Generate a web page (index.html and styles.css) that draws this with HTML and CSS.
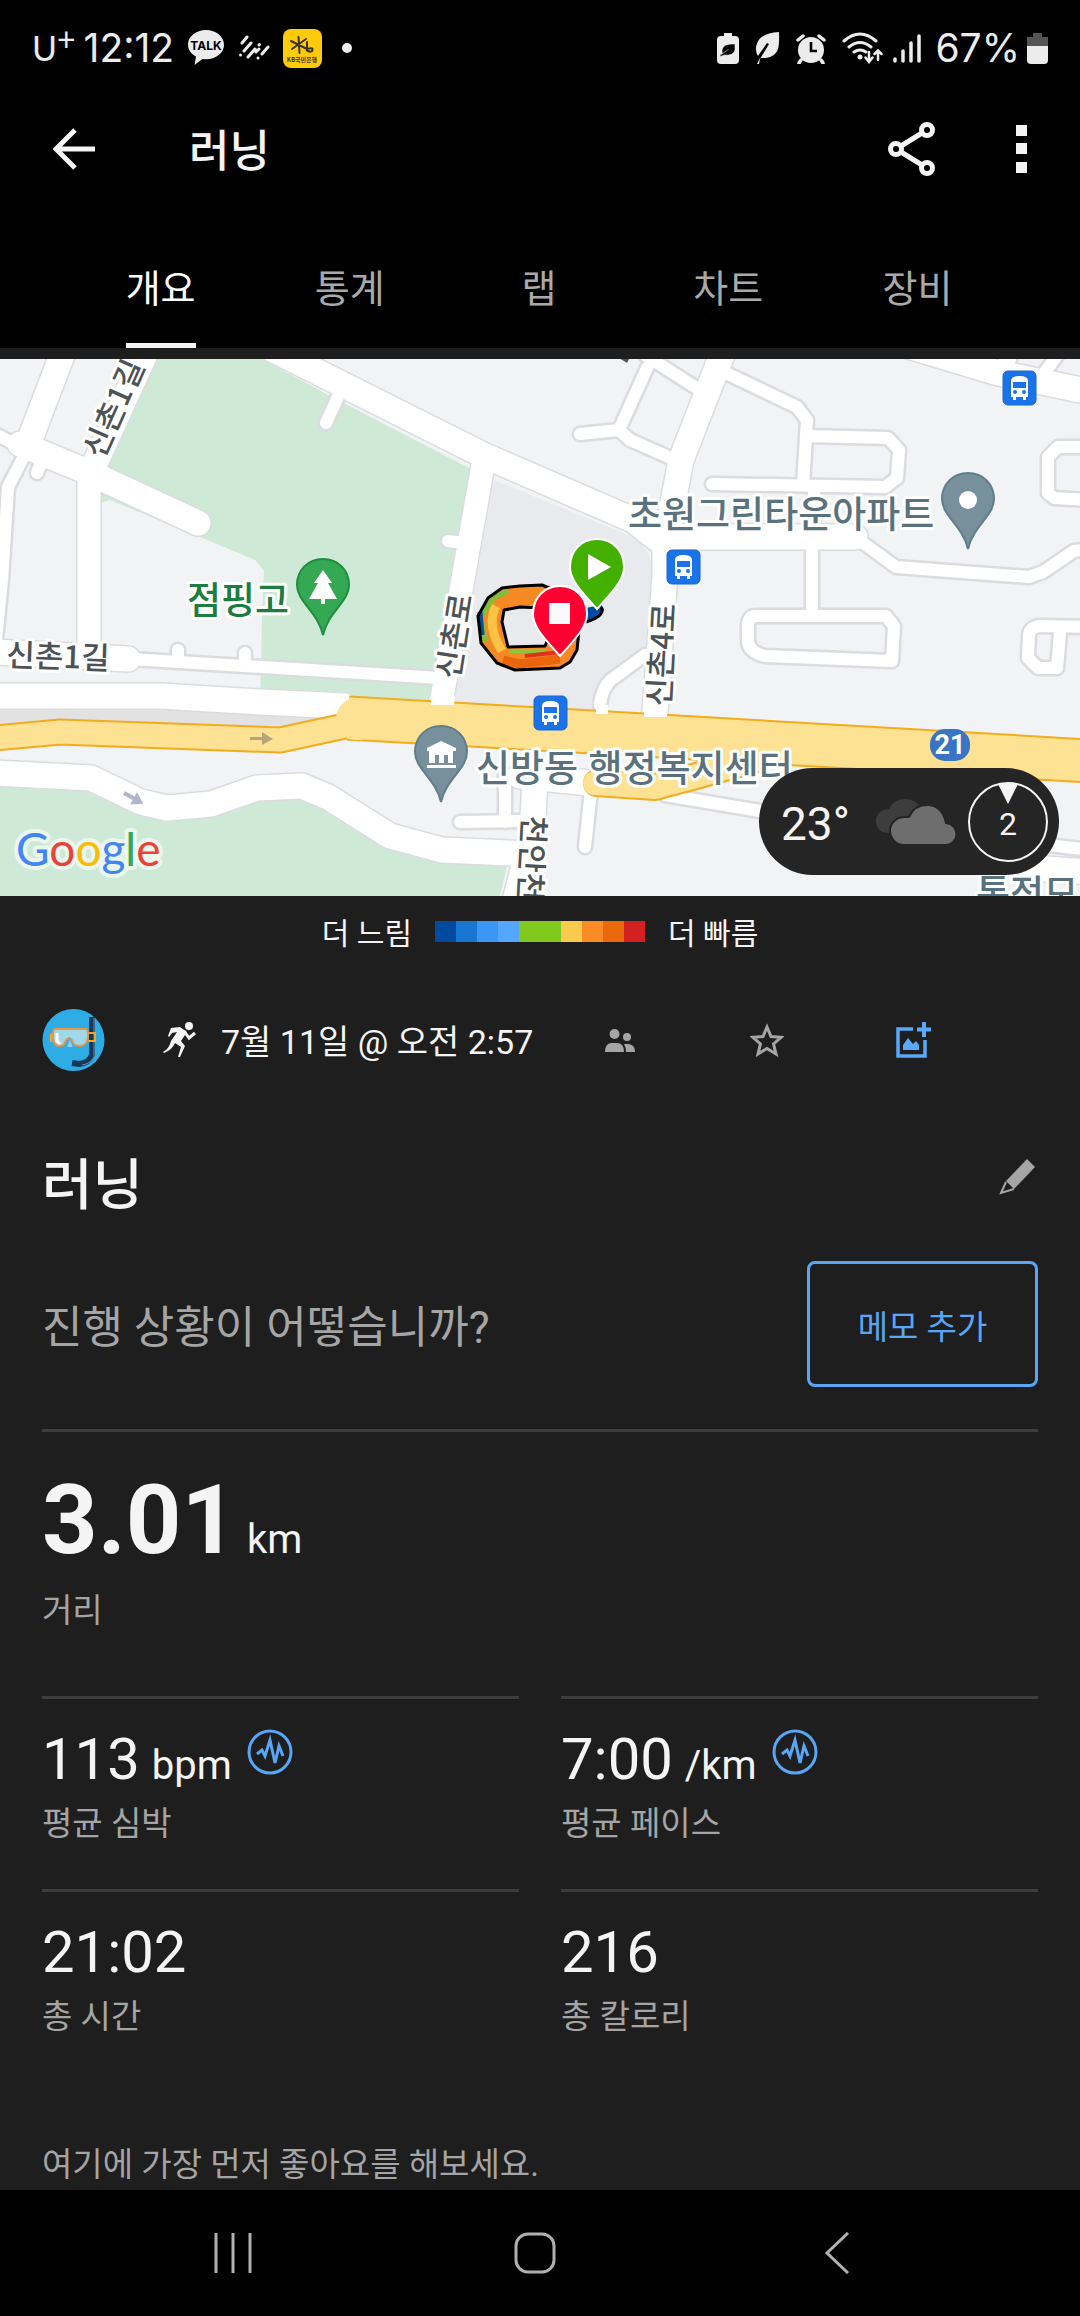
FILE: index.html
```html
<!DOCTYPE html>
<html lang="ko">
<head>
<meta charset="utf-8">
<meta name="viewport" content="width=device-width, initial-scale=1">
<title>러닝</title>
<link rel="stylesheet" href="styles.css">
</head>
<body>
<header class="top">
  <div class="status">
    <div class="status-side">
      <span class="carrier">U<sup>+</sup></span>
      <span class="clock">12:12</span>
      <svg class="ic-talk" width="38" height="38" viewBox="0 0 38 38"><path d="M19 1C9 1 1 7.500 1 15.500c0 5 3 9.500 8 12L7.500 36l8-6c1 .2 2.300.3 3.500.3 10 0 18-6.500 18-14.600S29 1 19 1z" fill="#ececec"/><text x="19" y="21" text-anchor="middle" class="talk-text">TALK</text></svg>
      <svg width="32" height="28" viewBox="0 0 32 28" fill="none" stroke="#ececec" stroke-width="3" stroke-linecap="round"><path d="M4 9l5-6M6 17l7-8M2.500 21v.1M10 23l7-8M21 11l.5-.5M20 24v.1M18 18l3-3M24 20l6-7"/></svg>
      <svg class="ic-kb" width="39" height="39" viewBox="0 0 39 39"><rect width="39" height="39" rx="8" fill="#fdcb0a"/><path d="M8 12l16 8M9 20L23 10M15.500 8l1 16M24 13v7q6-2 5.500 1t-5.500.5" fill="none" stroke="#3a3223" stroke-width="2" stroke-linecap="round"/><text x="19" y="33" text-anchor="middle" class="kb-text">KB국민은행</text></svg>
      <svg width="10" height="10" viewBox="0 0 10 10"><circle cx="5" cy="5" r="5" fill="#ececec"/></svg>
    </div>
    <div class="status-side right">
      <svg width="22" height="31" viewBox="0 0 22 31"><path d="M7 0h8v3h3a4 4 0 0 1 4 4v20a4 4 0 0 1-4 4H4a4 4 0 0 1-4-4V7a4 4 0 0 1 4-4h3z" fill="#ececec"/><path d="M18 11q-12-1-13 6-.2 2 .5 3.500L3 22l.5 1.500 4-1.500q9 1 10.500-5zM5.500 20.500l6-4" fill="#000" stroke="#ececec" stroke-width=".6"/></svg>
      <svg width="25" height="32" viewBox="0 0 25 32"><path d="M24 0Q3 1 1 15q-.5 5 2 9l9-13 2 1L5 27l-1 5H2l3-6q16 1 18.500-11Q24.500 8 24 0z" fill="#ececec"/></svg>
      <svg width="30" height="31" viewBox="0 0 30 31"><circle cx="15" cy="17" r="13" fill="#ececec"/><path d="M2 7l5-4M28 7l-5-4M5 27l-2 3M25 27l2 3" stroke="#ececec" stroke-width="3.500" stroke-linecap="round"/><path d="M15 9v9h6" fill="none" stroke="#000" stroke-width="2.600"/></svg>
      <svg class="ic-wifi" width="42" height="32" viewBox="0 0 42 32" fill="none" stroke="#ececec" stroke-width="3" stroke-linecap="round"><path d="M2 9Q18-5 34 9M7 15q11-9 22 0M12 20q6-4 12 0"/><circle cx="18" cy="25" r="2.500" fill="#ececec" stroke="none"/><path d="M27 20v9m-3.500-3.500L27 30l3.500-4.500M36 28v-9m-3.500 3L36 18.500l3.500 3.500" stroke-width="2.500"/></svg>
      <svg width="28" height="31" viewBox="0 0 28 31" stroke="#ececec" stroke-width="3.500" stroke-linecap="round"><path d="M2 26v2M10 18v10M18 10v18M26 3v25"/></svg>
      <span class="percent">67%</span>
      <svg width="21" height="31" viewBox="0 0 21 31"><path d="M6 0h9v4h6v9H0V4h6z" fill="#555"/><path d="M0 13h21v14a4 4 0 0 1-4 4H4a4 4 0 0 1-4-4z" fill="#ececec"/></svg>
    </div>
  </div>
  <div class="appbar">
    <button class="icon-btn" aria-label="뒤로"><svg width="42" height="42" viewBox="0 0 42 42" fill="none" stroke="#f4f4f4" stroke-width="5"><path d="M22 2L3 21l19 19M4 21h38"/></svg></button>
    <h1>러닝</h1>
    <button class="icon-btn" aria-label="공유"><svg width="48" height="54" viewBox="0 0 48 54" fill="none" stroke="#f4f4f4" stroke-width="5"><circle cx="8" cy="27" r="5.500"/><circle cx="39" cy="8" r="5.500"/><circle cx="39" cy="46" r="5.500"/><path d="M13 24l21-13M13 30l21 13"/></svg></button>
    <button class="icon-btn more" aria-label="더보기"><svg width="11" height="48" viewBox="0 0 11 48" fill="#f4f4f4"><path d="M0 0h11v11H0zM0 18h11v11H0zM0 37h11v11H0z"/></svg></button>
  </div>
  <nav class="tabs">
    <a href="#overview" class="active">개요</a>
    <a href="#stats">통계</a>
    <a href="#laps">랩</a>
    <a href="#charts">차트</a>
    <a href="#gear">장비</a>
  </nav>
</header>

<main>
  <section class="map" aria-label="지도">
    <svg class="map-canvas" viewBox="0 359 1080 537">
      <defs>
        <g id="wide">
          <path d="M64 350L27 447"/>
          <path d="M146 352L92 470"/>
          <path d="M20 444L88 472L198 523"/>
          <path d="M270 348L483 455L633 520L665 545"/>
          <path d="M725 347L681 460L665 545L665 575L655 712"/>
          <path d="M665 537L855 537"/>
          <path d="M905 345L995 372L1090 392"/>
          <path d="M-5 696L25 696L160 696L260 702L345 706"/>
          <path d="M-5 773L91 778L141 802L167 808L211 804L257 788L302 786L328 797L390 836L442 850L530 854"/>
          <path d="M-5 652L128 659"/>
          <path d="M520 776L590 783"/>
          <path d="M535 780L532 835L514 905"/>
          <path d="M1030 868L1090 872"/>
        </g>
        <g id="medium">
          <path d="M89 470L89 650"/>
          <path d="M483 465L442 698"/>
        </g>
        <g id="narrow">
          <path d="M-5 434L27 450L8 487L2 580L-5 650"/>
          <path d="M42 460L37 473M341 390L326 423M448 541L465 543"/>
          <path d="M130 659L440 678M178 650L178 660M245 653L245 663"/>
          <path d="M645 355L695 387M647 368L619 430L580 434M619 430L630 440L680 462"/>
          <path d="M728 374L797 407L807 420L803 485M807 436L888 438L899 450L897 478L885 487L712 484M814 487L814 525"/>
          <path d="M855 537L896 567L1029 577L1043 572L1074 551L1090 549"/>
          <path d="M812 545L812 615M755 616L886 616L894 626L892 661L765 656Q748 652 748 640V627Q748 616 755 616"/>
          <path d="M1090 447L1058 447L1048 457L1048 493L1054 498L1090 500"/>
          <path d="M1090 627L1040 626Q1030 627 1029 635L1028 658L1038 668L1057 668L1060 633"/>
          <path d="M600 705Q602 688 611 680L645 655"/>
          <path d="M505 775L505 822M460 822L520 821M591 790L585 847"/>
          <path d="M665 795L760 811L1090 850"/>
          <path d="M1045 372L1065 345M1010 360L995 350"/>
        </g>
        <path id="pin" d="M0-26C-15-26-26-15-26 0C-26 17-5 27 0 50C5 27 26 17 26 0C26-15 15-26 0-26z"/>
        <path id="marker" d="M0-28C-16-28-27-16-27 0C-27 14-14 26 0 42C14 26 27 14 27 0C27-16 16-28 0-28z"/>
        <g id="bus">
          <rect width="33" height="34" rx="5" fill="#1a73e8" stroke="#1967d2"/>
          <path d="M8 26V10q0-5 8.500-5T25 10v16h-2v3h-3v-3h-7v3h-3v-3z" fill="#fff"/>
          <path d="M10 11h13v6H10z" fill="#1a73e8"/><circle cx="12" cy="21" r="2" fill="#1a73e8"/><circle cx="21" cy="21" r="2" fill="#1a73e8"/>
        </g>
      </defs>
      <rect y="359" width="1080" height="537" fill="#f1f3f4"/>
      <path d="M152 359L100 470V503L110 500L200 537L255 560L264 571L262 620L260 705L430 712L471 469L332 397L262 359z" fill="#ceead6"/>
      <path d="M494 480L640 540L655 566L645 655L605 690L596 715L454 705z" fill="#e8eaed"/>
      <path d="M0 773L91 778L167 808L257 788L302 786L390 836L442 850L510 854L500 896H0z" fill="#ceead6"/>
      <path d="M0 705H160L335 714L280 730L60 722L0 730z" fill="#e2e2e2"/>
      <g class="roads casing">
        <use href="#wide" stroke-width="28"/><use href="#medium" stroke-width="26"/><use href="#narrow" stroke-width="17"/>
      </g>
      <g class="roads surface">
        <use href="#wide" stroke-width="25"/><use href="#medium" stroke-width="23"/><use href="#narrow" stroke-width="12"/>
      </g>
      <g class="roads highway-edge">
        <path d="M-5 738L60 732L280 740L345 726" stroke-width="27"/>
        <path d="M348 718L540 729L1090 761" stroke-width="45" stroke-linecap="butt"/>
        <path d="M597 783L655 787L700 775L760 758" stroke-width="28"/>
      </g>
      <g class="roads highway">
        <path d="M-5 738L60 732L280 740L345 726" stroke-width="23"/>
        <path d="M348 718L540 729L1090 761" stroke-width="41" stroke-linecap="butt"/>
        <path d="M357 719L358 719" stroke-width="42"/>
        <path d="M595 783L655 787L700 775L760 758" stroke-width="24"/>
      </g>
      <path d="M431 696h24l-1 9h-23zM644 708h23v9h-23zM596 705h12v9h-12z" fill="#fff"/>
      <path d="M250 737h12v-5l11 7-11 6v-5h-12z" fill="#b5a57a"/>
      <path d="M0-2h11v-5l11 7-11 7v-5H0z" transform="translate(124 793) rotate(29)" fill="#b0b4cc"/>
      <path d="M621 357l7 4" stroke="#4c5256" stroke-width="4"/>

      <g class="map-label road-label">
        <text transform="translate(103 460) rotate(-66)">신촌1길</text>
        <text transform="translate(6 666) rotate(2)">신촌1길</text>
        <text transform="translate(459 680) rotate(-81)">신촌로</text>
        <text transform="translate(670 707) rotate(-87)">신촌4로</text>
        <text transform="translate(523 815) rotate(93)">천안천</text>
      </g>

      <path d="M502 588L520 586L542 585L562 593L580 620L577 650L570 662L560 668L515 670L497 663L481 643L478 616L488 598zM504 610L502 622L508 647L545 646L552 630L542 608L520 607z" fill="#f58a24" fill-rule="evenodd"/>
      <path d="M482 615L493 598L508 591M482 622L485 642" fill="none" stroke="#7cc13b" stroke-width="5"/>
      <path d="M480 612L482 635" fill="none" stroke="#0b4a8c" stroke-width="5"/>
      <path d="M496 606Q486 625 502 651" fill="none" stroke="#fbc343" stroke-width="9"/>
      <path d="M503 660L520 664L560 659" fill="none" stroke="#ea650d" stroke-width="9"/>
      <path d="M509 651L545 651" fill="none" stroke="#8cc63f" stroke-width="4"/>
      <path d="M525 656L560 652" fill="none" stroke="#e0311a" stroke-width="4"/>
      <path d="M502 588L520 586L542 585L562 593L580 620L577 650L570 662L560 668L515 670L497 663L481 643L478 616L488 598zM504 610L502 622L508 647L545 646L552 630L542 608L520 607z" fill="none" stroke="#000" stroke-width="3" stroke-linejoin="round"/>
      <path d="M585 608L602 605L602 614Q596 620 586 622z" fill="#004ba0"/>
      <path d="M601 607Q604 611 600 615T586 622" fill="none" stroke="#000" stroke-width="3"/>
      <use href="#marker" x="597" y="567" fill="#43b000" stroke="#fff" stroke-width="2"/>
      <path d="M588 554v26l23-13z" fill="#fff"/>
      <use href="#marker" x="560" y="614" fill="#ff0032" stroke="#fff" stroke-width="2"/>
      <path d="M549 603h21v21h-21z" fill="#fafafa"/>

      <use href="#bus" x="1003" y="371"/>
      <use href="#bus" x="667" y="550"/>
      <use href="#bus" x="534" y="696"/>
      <rect x="930" y="729" width="40" height="32" rx="15" fill="#3a74c5"/>
      <text x="950" y="754" text-anchor="middle" class="shield-text">21</text>

      <use href="#pin" x="323" y="585" fill="#34a853" stroke="#1e8e3e" stroke-width="2"/>
      <path d="M323 570l9 13h-4l9 16h-12v5h-4v-5h-12l9-16h-4z" fill="#fff"/>
      <use href="#pin" x="968" y="499" fill="#78909c" stroke="#607d8b" stroke-width="2"/>
      <circle cx="968" cy="500" r="9" fill="#fff"/>
      <use href="#pin" x="441" y="752" fill="#78909c" stroke="#607d8b" stroke-width="2"/>
      <path d="M441 741l15 7v3h-3v12h-5v-8h-4v8h-5v-8h-4v8h-6v-12h-2v-3zM427 765h29v3h-29z" fill="#fff"/>

      <g class="map-label place-label">
        <text x="187" y="614" class="park-label">점핑고</text>
        <text x="628" y="528">초원그린타운아파트</text>
        <text x="476" y="782">신방동 행정복지센터</text>
        <text x="976" y="907">통정모</text>
      </g>
      <text x="16" y="866" class="google"><tspan fill="#4285f4">G</tspan><tspan fill="#ea4335">o</tspan><tspan fill="#fbbc05">o</tspan><tspan fill="#4285f4">g</tspan><tspan fill="#34a853">l</tspan><tspan fill="#ea4335">e</tspan></text>
    </svg>
    <div class="weather">
      <span class="temp">23°</span>
      <svg width="82" height="46" viewBox="0 0 82 46"><path d="M13 34a12 12 0 0 1 2-24Q20 0 31 0q12 0 18 12L40 34z" fill="#3d3d3d"/><path d="M29 46a14 14 0 0 1 2-28h4Q40 6 53 6q15 0 19 18a11 11 0 0 1-1 22z" fill="#6e6e6e" stroke="#252525" stroke-width="2"/></svg>
      <span class="wind">2<svg viewBox="0 0 20 20"><path d="M0 0h20l-10 20z" fill="#f4f4f4"/></svg></span>
    </div>
  </section>

  <div class="legend">
    <span>더 느림</span>
    <div class="scale"><i class="c1"></i><i class="c2"></i><i class="c3"></i><i class="c4"></i><i class="c5"></i><i class="c5"></i><i class="c6"></i><i class="c7"></i><i class="c8"></i><i class="c9"></i></div>
    <span>더 빠름</span>
  </div>

  <div class="content">
    <div class="meta">
      <svg class="avatar" width="63" height="62" viewBox="0 0 63 62"><circle cx="31.500" cy="31" r="31" fill="#2dade4"/><path d="M50 8v38q-3 8-13 9l-7-1" fill="none" stroke="#12395c" stroke-width="6"/><path d="M52 9v39q-4 7-12 8" fill="none" stroke="#6d93a8" stroke-width="1"/><path d="M9 25v8M46 24h7v8h-7" stroke="#f5a623" stroke-width="2" fill="none"/><path d="M14 20h29q3 0 3 4v4q-1 9-8 9-6 0-7-4-2-4-4-4t-4 4q-1 4-5 4-7 0-7-9v-4q0-4 3-4z" fill="#9fd9e8" stroke="#e8954a" stroke-width="2"/><path d="M15 24v8l3 3" stroke="#fff" stroke-width="3" fill="none"/><path d="M25 38l3-9 3 9" fill="#8bd0ef" stroke="#4eb4e4"/></svg>
      <svg class="runner" width="34" height="36" viewBox="0 0 34 36"><circle cx="26" cy="4" r="4" fill="#f4f4f4"/><path d="M8 6l9-1 7 5-6 9 4 5-5 11h-2l3-10-6-4q-3 7-11 10l-1-1q6-3 8-11l6-9-5 1-3 4-1-1z" fill="#f4f4f4"/><path d="M21 9l5 7 6-5" stroke="#f4f4f4" stroke-width="3" fill="none"/></svg>
      <span class="date">7월 11일 @ 오전 2:57</span>
      <div class="actions">
        <button aria-label="공개 범위"><svg width="30" height="23" viewBox="0 0 30 23" fill="#a5a5a5"><circle cx="9.500" cy="5" r="5"/><circle cx="22" cy="8" r="4"/><path d="M0 23q0-9 7-9h5q7 0 7 9zM19 15h5q6 1 6 8h-9q0-5-2-8z"/></svg></button>
        <button aria-label="즐겨찾기"><svg width="34" height="34" viewBox="0 0 34 34" fill="none" stroke="#a5a5a5" stroke-width="3"><path d="M17 4l4 9.500 10 .8-7.500 6.600L26 31l-9-5.500L8 31l2.500-10.100L3 14.300l10-.8z"/></svg></button>
        <button aria-label="사진 추가"><svg width="36" height="36" viewBox="0 0 36 36" fill="none" stroke="#58a9f9"><path d="M17 7H2v27h27V18" stroke-width="3.500"/><path d="M28 0v15M21 7.500h14" stroke-width="4"/><path d="M7 28v-5l5-7 5 6 3-3 3 4v5z" fill="#58a9f9" stroke="none"/></svg></button>
      </div>
    </div>

    <div class="title-row">
      <h2>러닝</h2>
      <button class="icon-btn edit" aria-label="이름 편집"><svg width="38" height="36" viewBox="0 0 38 36"><path d="M8 22L29 0l8 8-21 22z" fill="#a5a5a5"/><path d="M8 23l-5 11 13-4" fill="none" stroke="#a5a5a5" stroke-width="2"/></svg></button>
    </div>

    <div class="memo-row">
      <p>진행 상황이 어떻습니까?</p>
      <button class="memo">메모 추가</button>
    </div>

    <section class="distance">
      <div class="big"><b>3.01</b> km</div>
      <div class="label">거리</div>
    </section>

    <section class="stats">
      <div class="stat">
        <div class="value">113 <small>bpm</small><svg class="pulse" width="46" height="46" viewBox="0 0 46 46"><circle cx="23" cy="23" r="21"/><path d="M10 25l5-4 3 6 5-16 5 23 4-17 4 10"/></svg></div>
        <div class="label">평균 심박</div>
      </div>
      <div class="stat">
        <div class="value">7:00 <small>/km</small><svg class="pulse" width="46" height="46" viewBox="0 0 46 46"><circle cx="23" cy="23" r="21"/><path d="M10 25l5-4 3 6 5-16 5 23 4-17 4 10"/></svg></div>
        <div class="label">평균 페이스</div>
      </div>
      <div class="stat">
        <div class="value">21:02</div>
        <div class="label">총 시간</div>
      </div>
      <div class="stat">
        <div class="value">216</div>
        <div class="label">총 칼로리</div>
      </div>
    </section>

    <p class="likes">여기에 가장 먼저 좋아요를 해보세요.</p>
  </div>
</main>

<footer class="sysnav">
  <button aria-label="최근 앱"><svg width="40" height="42" viewBox="0 0 40 42" stroke="#b0b0b0" stroke-width="3"><path d="M3 1v40M20 1v40M37 1v40"/></svg></button>
  <button aria-label="홈"><svg width="42" height="42" viewBox="0 0 42 42" fill="none" stroke="#b0b0b0" stroke-width="3"><rect x="2" y="2" width="38" height="38" rx="12"/></svg></button>
  <button aria-label="뒤로"><svg width="26" height="42" viewBox="0 0 26 42" fill="none" stroke="#b0b0b0" stroke-width="3"><path d="M24 1L3 21l21 20"/></svg></button>
</footer>
</body>
</html>
```
FILE: styles.css
```css
* { box-sizing: border-box; }

body {
  margin: 0;
  min-height: 100vh;
  display: flex;
  flex-direction: column;
  background: #1e1e1e;
  color: #f4f4f4;
  font-family: Roboto, "Noto Sans CJK KR", sans-serif;
  font-size: 33px;
  line-height: 48px;
}

h1, h2, p { margin: 0; font-weight: 500; }
svg { display: block; flex: none; }

button {
  display: flex;
  align-items: center;
  justify-content: center;
  padding: 0;
  border: 0;
  background: none;
  color: inherit;
  font: inherit;
  cursor: pointer;
}

.top { background: #000; margin-bottom: 11px; }

/* Status bar */
.status {
  display: flex;
  justify-content: space-between;
  padding: 24px 32px;
  color: #ececec;
}
.status-side { display: flex; align-items: center; gap: 13px; }
.status-side.right { gap: 16px; }
.carrier { font: 400 34px/48px Lato, sans-serif; display: flex; }
.carrier sup { font-size: 32px; line-height: 30px; }
.clock, .percent { font: 400 39px/48px Inter, sans-serif; }
.clock { margin-left: -5px; }
.percent { margin: 0 -9px 0 -2px; }
.talk-text { font: 700 12px Inter, sans-serif; fill: #000; }
.kb-text { font: 700 6px "Noto Sans CJK KR", sans-serif; fill: #3a3223; }
.ic-kb { margin-right: 7px; }
.ic-wifi { margin-right: -7px; }

/* App bar */
.appbar {
  display: flex;
  align-items: center;
  height: 106px;
  padding: 0 53px;
}
.appbar h1 {
  flex: 1;
  margin-left: 94px;
  padding-top: 6px;
  font-size: 44px;
  line-height: 64px;
}
.more { margin-left: 80px; }

/* Tabs */
.tabs {
  display: grid;
  grid-template-columns: repeat(5, 1fr);
  justify-items: center;
  padding: 28px 68px 0 66px;
}
.tabs a {
  padding: 34px 0 28px;
  border-bottom: 5px solid transparent;
  color: #a9a9a9;
  font-size: 38px;
  line-height: 51px;
  text-decoration: none;
}
.tabs .active { color: #fff; border-color: #f4f4f4; }

/* Map */
.map { position: relative; overflow: hidden; }
.map-canvas { width: 100%; height: auto; }
.roads { fill: none; stroke-linecap: round; stroke-linejoin: round; }
.casing { stroke: #dadce0; }
.surface { stroke: #fff; }
.highway-edge { stroke: #f2ac1e; }
.highway { stroke: #fde293; }
.map-label {
  font-family: "Noto Sans CJK KR", sans-serif;
  font-weight: 500;
  stroke: #fff;
  stroke-width: 6px;
  stroke-linejoin: round;
  paint-order: stroke;
}
.road-label { font-size: 31px; fill: #4c5256; }
.place-label { font-size: 37px; fill: #5a727d; }
.park-label { fill: #1b7d3f; }
.shield-text { font: 700 27px Roboto, sans-serif; fill: #fff; }
.google {
  font: 400 46px Lato, sans-serif;
  stroke: #eaf6ee;
  stroke-width: 8px;
  stroke-linejoin: round;
  paint-order: stroke;
}

.weather {
  position: absolute;
  right: 21px;
  bottom: 21px;
  display: flex;
  align-items: center;
  gap: 12px;
  width: 300px;
  height: 107px;
  padding: 0 11px 0 22px;
  border-radius: 54px;
  background: #252525;
}
.temp { flex: 1; padding-top: 4px; font-size: 46px; }
.wind {
  position: relative;
  width: 80px;
  height: 80px;
  border: 2px solid #f4f4f4;
  border-radius: 50%;
  font-size: 32px;
  line-height: 80px;
  text-align: center;
}
.wind svg { position: absolute; top: 0; left: 28px; width: 20px; height: 20px; }

/* Pace legend */
.legend {
  display: flex;
  align-items: center;
  justify-content: center;
  gap: 23px;
  padding: 14px 0;
  font-size: 30px;
  line-height: 39px;
}
.legend span { padding-top: 4px; }
.scale { display: flex; }
.scale i { width: 21px; height: 21px; }
.c1 { background: #004ba0; }
.c2 { background: #1976d2; }
.c3 { background: #3c96f5; }
.c4 { background: #54a6ff; }
.c5 { background: #82c91e; }
.c6 { background: #f9cb4c; }
.c7 { background: #fb8b24; }
.c8 { background: #e9690c; }
.c9 { background: #d32020; }

/* Activity details */
.content { padding: 42px 42px 0; }
.meta { display: flex; align-items: center; padding-right: 51px; }
.runner { margin: 0 24px 0 58px; }
.date { flex: 1; padding-top: 4px; font-size: 34px; white-space: nowrap; }
.actions { display: flex; }
.actions button { width: 147px; height: 62px; }

.title-row {
  display: flex;
  align-items: flex-start;
  justify-content: space-between;
  margin-top: 77px;
}
.title-row h2 { padding-top: 4px; font-size: 55px; line-height: 66px; }
.edit { height: 58px; padding-right: 2px; }

.memo-row {
  display: flex;
  align-items: center;
  justify-content: space-between;
  margin-top: 43px;
  padding-bottom: 42px;
  border-bottom: 3px solid #3c3c3c;
}
.memo-row p { padding-top: 8px; font-size: 44px; font-weight: 400; color: #a5a5a5; }
.memo {
  width: 231px;
  height: 126px;
  padding-top: 8px;
  border: 3px solid #58a6f5;
  border-radius: 8px;
  color: #58a6f5;
}

.distance { padding: 30px 0 61px; }
.big { font-size: 40px; line-height: 48px; }
.big b { font-size: 97px; line-height: 116px; }
.label { color: #a5a5a5; }
.distance .label { margin-top: 9px; }

.stats { display: grid; grid-template-columns: 1fr 1fr; column-gap: 42px; }
.stat { border-top: 3px solid #3c3c3c; padding: 27px 0 41px; }
.value {
  display: flex;
  align-items: baseline;
  gap: 12px;
  margin-bottom: 7px;
  font-size: 58px;
  line-height: 67px;
}
.value small { font-size: 40px; line-height: 40px; }
.pulse { align-self: flex-start; margin: 3px 0 0 3px; fill: none; stroke: #58a6f5; stroke-width: 3px; }

.likes { padding-top: 59px; font-weight: 400; color: #a5a5a5; }

/* System navigation */
.sysnav {
  display: flex;
  align-items: center;
  justify-content: space-around;
  height: 126px;
  margin-top: auto;
  padding: 0 92px 0 82px;
  background: #000;
}
.sysnav button { flex: 1; height: 100%; }
```
